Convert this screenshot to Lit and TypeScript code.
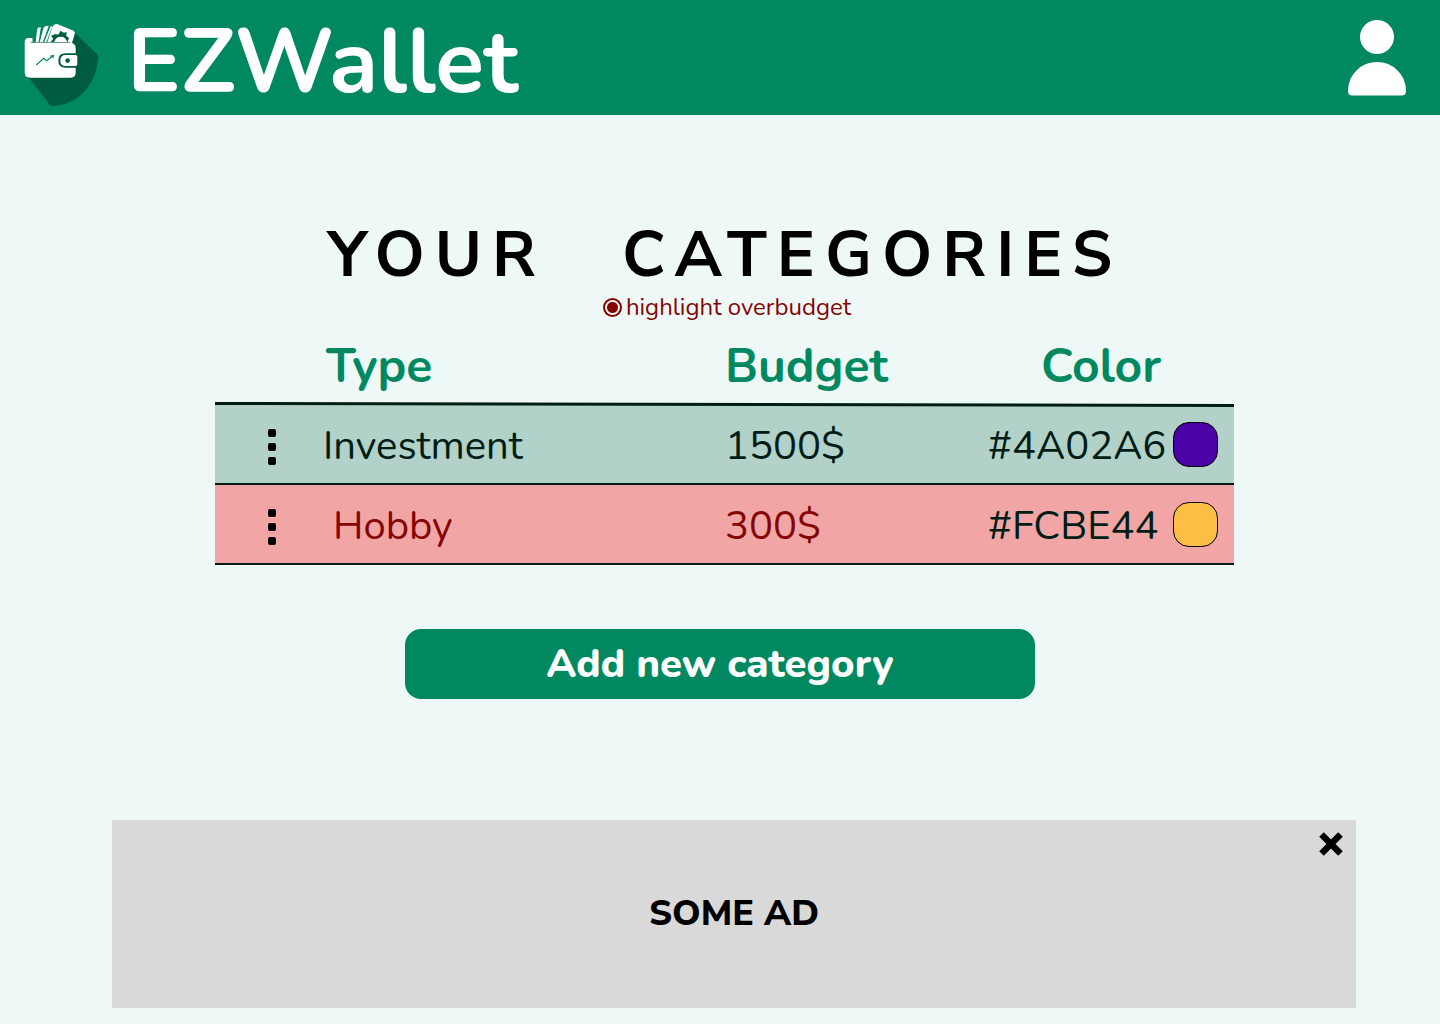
import { LitElement, html, css, svg } from "lit";
import { customElement, property, state } from "lit/decorators.js";

interface Category {
  type: string;
  budget: string;
  color: string;
  over: boolean;
}

const CATEGORIES: Category[] = [
  { type: "Investment", budget: "1500$", color: "#4A02A6", over: false },
  { type: "Hobby", budget: "300$", color: "#FCBE44", over: true },
];

@customElement("app-header")
export class AppHeader extends LitElement {
  static styles = css`
    :host {
      display: block;
    }
    .bar {
      display: flex;
      align-items: center;
      height: 115px;
      box-sizing: border-box;
      padding: 0 32px 0 24px;
      background: #008961;
      color: #fff;
    }
    .brand {
      display: flex;
      align-items: center;
      gap: 27px;
      padding-top: 10px;
      color: inherit;
      text-decoration: none;
    }
    .logo {
      display: block;
      width: 76px;
      height: 84px;
      margin-top: 4px;
    }
    .name {
      font-size: 90px;
      line-height: 108px;
      font-weight: 700;
    }
    .profile {
      margin-left: auto;
      padding: 0;
      border: 0;
      background: none;
      cursor: pointer;
    }
    .person {
      display: block;
      width: 62px;
      height: 76px;
    }
  `;

  render() {
    return html`
      <header class="bar">
        <a class="brand" href="#home">
          <svg class="logo" viewBox="0 0 76 84" aria-hidden="true">
            <path fill="#005C41" d="M51 10L74.300 32.500Q74 53 61 68Q47 83 26.700 83L4 54Z" />
            <g fill="#fff">
              <path d="M11.500 20L13.200 6.500Q13.500 4.200 16.800 4L14.500 20Z" />
              <path d="M15.500 20L19.500 5Q20.500 2.800 24.800 2.800L18.500 20Z" />
              <path d="M19.800 20L26.500 3.500L28.500 3.200L22 20Z" />
              <path d="M23 20L28.500 4Q30 0.300 33 1L48.500 7.300Q51.500 8.800 50.700 11L48 20Z" />
              <path
                d="M4.500 15H8.500V20H46.500Q51.700 20 51.700 25.500V49.500Q51.700 54.700 46.500 54.700H6Q0.700 54.700 0.700 49.500V19Q0.700 15 4.500 15Z"
              />
            </g>
            <path
              fill="#005C41"
              d="M26.500 19.400L29.300 15.500L27 13L30.500 11.300L34.500 11.500L36.500 7.800L39 9.500L43 9.500L42 12.500L45 15L43.300 19.400Z"
            />
            <path fill="#fff" d="M30 19.600Q31.500 13.800 36.800 13.800Q42 13.800 43.200 19.600Z" />
            <path d="M6.500 19.400H46" stroke="#5D9A84" stroke-width="1" />
            <path
              fill="none"
              stroke="#008961"
              stroke-width="1.100"
              d="M12.300 42L19.700 35.300L22.700 37.700L29 32.700M26.500 33L29.500 32.500L29 35.200"
            />
            <path fill="#005C41" d="M53.300 30.300H41.500Q34.300 30.300 34.300 37.500Q34.300 44.700 41.500 44.700H53.300Z" />
            <path fill="#fff" d="M41.800 32H51.500Q53.300 32 53.300 34V41Q53.300 43 51.500 43H41.800Q36.300 43 36.300 37.500Q36.300 32 41.800 32Z" />
            <circle cx="43.600" cy="37.600" r="2.300" fill="#005C41" />
          </svg>
          <span class="name">EZWallet</span>
        </a>
        <button class="profile" aria-label="Profile">
          <svg class="person" viewBox="0 0 62 76" fill="#fff" aria-hidden="true">
            <circle cx="31" cy="17" r="17" />
            <path d="M2 71Q2 58 11 50Q19 42 31 42Q43 42 51 50Q60 58 60 71Q60 75.500 55.500 75.500H6.500Q2 75.500 2 71Z" />
          </svg>
        </button>
      </header>
    `;
  }
}

@customElement("category-table")
export class CategoryTable extends LitElement {
  @property({ attribute: false }) rows: Category[] = [];
  @property({ type: Boolean }) highlight = true;

  static styles = css`
    :host {
      display: block;
    }
    .table {
      width: 100%;
      border-collapse: separate;
      border-spacing: 0;
      table-layout: fixed;
      color: #001d15;
    }
    .col-menu {
      width: 108px;
    }
    .col-budget {
      width: 263px;
    }
    .col-color {
      width: 246px;
    }
    .head {
      position: relative;
    }
    .head::after {
      content: "";
      position: absolute;
      left: 0;
      right: 0;
      bottom: -1px;
      height: 3px;
      background: #001d15;
      transform: rotate(0.11deg);
    }
    th {
      height: 80px;
      padding: 2px 0 0;
      box-sizing: border-box;
      text-align: left;
      font-size: 48px;
      line-height: 64px;
      font-weight: 700;
      color: #008961;
    }
    th.type {
      padding-left: 3px;
    }
    th.color {
      text-align: center;
      padding-right: 20px;
    }
    td {
      height: 80px;
      padding: 4px 0 0;
      box-sizing: border-box;
      border-bottom: 2px solid #001d15;
      background: #b2d1c9;
      font-size: 40px;
      line-height: 56px;
      font-weight: 400;
    }
    .over td {
      background: #f1a5a5;
    }
    .over .type,
    .over .budget {
      color: #850505;
    }
    .over .type {
      padding-left: 10px;
    }
    .menu {
      display: block;
      margin-left: 48px;
      padding: 2px 5px 0;
      border: 0;
      background: none;
      cursor: pointer;
    }
    .dots {
      display: block;
      width: 8px;
      height: 36px;
    }
    td.color {
      padding-top: 0;
    }
    .value {
      display: flex;
      align-items: center;
      justify-content: space-between;
      padding-right: 16px;
    }
    .hex {
      padding-top: 4px;
    }
    .swatch {
      box-sizing: border-box;
      width: 45px;
      height: 45px;
      border: 1px solid #000;
      border-radius: 16px;
    }
  `;

  render() {
    return html`
      <table class="table">
        <colgroup>
          <col class="col-menu" />
          <col />
          <col class="col-budget" />
          <col class="col-color" />
        </colgroup>
        <thead class="head">
          <tr>
            <th></th>
            <th scope="col" class="type">Type</th>
            <th scope="col">Budget</th>
            <th scope="col" class="color">Color</th>
          </tr>
        </thead>
        <tbody>
          ${this.rows.map(
            (row) => html`
              <tr class=${row.over && this.highlight ? "over" : ""}>
                <td>
                  <button class="menu" aria-label="Options for ${row.type}">
                    <svg class="dots" viewBox="0 0 8 36" aria-hidden="true">
                      ${[0, 14, 28].map((y) => svg`<rect y=${y} width="8" height="8" rx="2" />`)}
                    </svg>
                  </button>
                </td>
                <td class="type">${row.type}</td>
                <td class="budget">${row.budget}</td>
                <td class="color">
                  <div class="value">
                    <span class="hex">${row.color}</span>
                    <span class="swatch" style="background:${row.color}"></span>
                  </div>
                </td>
              </tr>
            `
          )}
        </tbody>
      </table>
    `;
  }
}

@customElement("ad-banner")
export class AdBanner extends LitElement {
  static styles = css`
    :host {
      display: block;
    }
    .ad {
      position: relative;
      display: flex;
      align-items: center;
      justify-content: center;
      height: 188px;
      background: #d9d9d9;
      color: #000;
      font-family: "Nunito Sans", Nunito, Lato, sans-serif;
      font-size: 36px;
      line-height: 48px;
      font-weight: 800;
    }
    .close {
      position: absolute;
      top: 12px;
      right: 13px;
      padding: 0;
      border: 0;
      background: none;
      cursor: pointer;
    }
    .cross {
      display: block;
      width: 24px;
      height: 24px;
    }
  `;

  render() {
    return html`
      <aside class="ad">
        <span>SOME AD</span>
        <button
          class="close"
          aria-label="Close"
          @click=${() => this.dispatchEvent(new CustomEvent("dismiss"))}
        >
          <svg class="cross" viewBox="0 0 24 24" aria-hidden="true">
            <path d="M2.500 2.500L21.500 21.500M21.500 2.500L2.500 21.500" stroke="#000" stroke-width="6.500" />
          </svg>
        </button>
      </aside>
    `;
  }
}

@customElement("app-root")
export class AppRoot extends LitElement {
  @state() private highlight = true;
  @state() private adOpen = true;

  static styles = css`
    :host {
      display: block;
      min-height: 100vh;
      box-sizing: border-box;
      background: #eef8f7;
      font-family: Nunito, Lato, "Open Sans", sans-serif;
    }
    button {
      font-family: inherit;
    }
    .main {
      display: flex;
      flex-direction: column;
    }
    .title {
      display: flex;
      justify-content: center;
      gap: 76px;
      margin: 100px 0 0;
      padding-left: 10px;
      font-family: "Nunito Sans", Nunito, Lato, sans-serif;
      font-size: 64px;
      line-height: 80px;
      font-weight: 700;
      letter-spacing: 10px;
      color: #000;
    }
    .filter {
      display: flex;
      align-items: center;
      align-self: center;
      gap: 4px;
      margin-left: 14px;
      font-size: 24px;
      line-height: 24px;
      color: #850505;
    }
    .radio {
      appearance: none;
      box-sizing: border-box;
      width: 19px;
      height: 19px;
      margin: 0;
      border: 2px solid #850505;
      border-radius: 50%;
    }
    .radio:checked {
      background: radial-gradient(circle, #850505 5px, transparent 6px);
    }
    .categories {
      margin: 6px 206px 0 215px;
    }
    .add {
      align-self: center;
      width: 44%;
      max-width: 630px;
      min-width: 400px;
      height: 70px;
      margin-top: 64px;
      border: 0;
      border-radius: 16px;
      background: #008961;
      color: #fff;
      font-size: 40px;
      line-height: 56px;
      font-weight: 800;
      cursor: pointer;
    }
    .banner {
      margin: 121px 84px 16px 112px;
    }
  `;

  render() {
    return html`
      <app-header></app-header>
      <main class="main">
        <h1 class="title"><span>YOUR</span> <span>CATEGORIES</span></h1>
        <label class="filter">
          <input
            class="radio"
            type="radio"
            name="highlight"
            .checked=${this.highlight}
            @click=${() => (this.highlight = !this.highlight)}
          />
          <span>highlight overbudget</span>
        </label>
        <category-table class="categories" .rows=${CATEGORIES} .highlight=${this.highlight}></category-table>
        <button class="add">Add new category</button>
        ${this.adOpen
          ? html`<ad-banner class="banner" @dismiss=${() => (this.adOpen = false)}></ad-banner>`
          : ""}
      </main>
    `;
  }
}
